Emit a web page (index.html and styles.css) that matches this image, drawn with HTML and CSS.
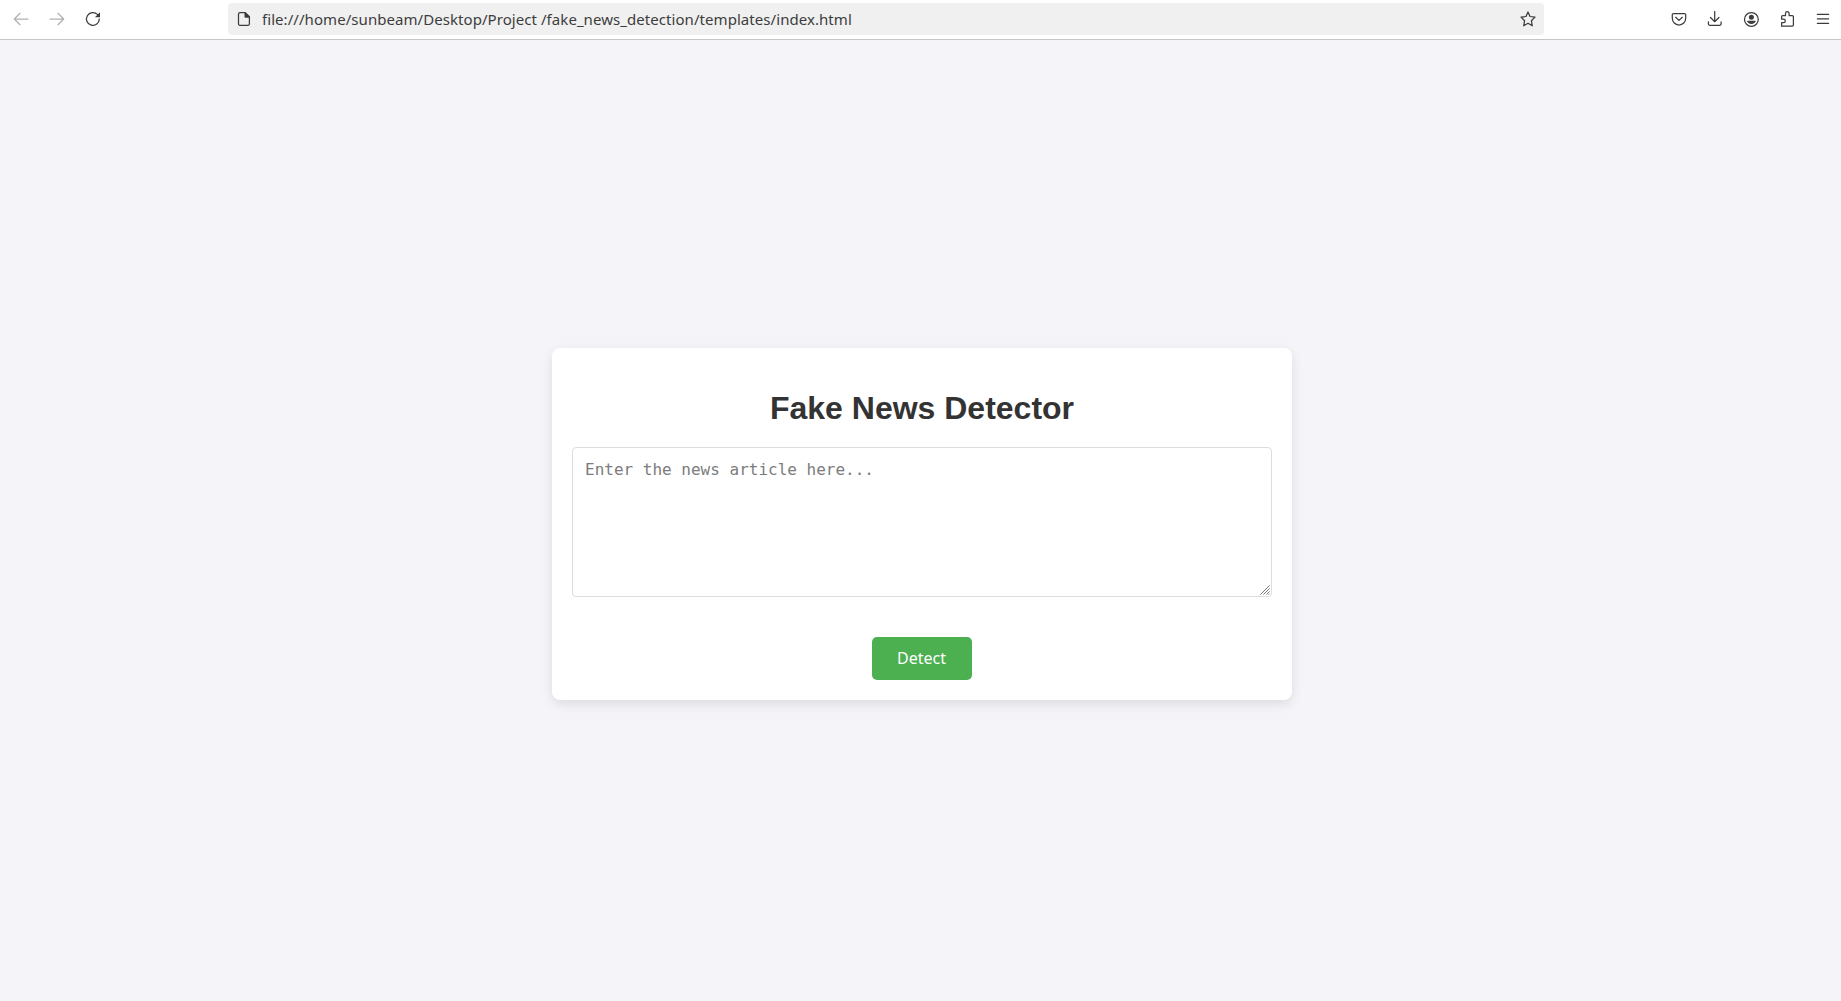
FILE: index.html
```html
<!DOCTYPE html>
<html lang="en">
<head>
<meta charset="utf-8">
<title>Fake News Detector</title>
<link rel="stylesheet" href="styles.css">
</head>
<body>
<header class="toolbar">
  <nav class="nav-buttons">
    <svg class="icon disabled" viewBox="0 0 16 16"><path d="M15 8H1.7M7 2.3 1.3 8 7 13.7"/></svg>
    <svg class="icon disabled" viewBox="0 0 16 16"><path d="M1 8h13.3M9 2.3 14.7 8 9 13.7"/></svg>
    <svg class="icon" viewBox="0 0 16 16"><path d="M14.3 8A6.4 6.4 0 1 1 12.4 3.4"/><path class="solid" d="M15 1.2V5.9a.4.4 0 0 1-.4.4H9.9z"/></svg>
  </nav>
  <div class="urlbar">
    <svg class="icon page-icon" viewBox="0 0 16 16"><path d="M4 1.7h5.3l4.1 4.1v7a1.5 1.5 0 0 1-1.5 1.5H4a1.5 1.5 0 0 1-1.5-1.5V3.2A1.5 1.5 0 0 1 4 1.7z"/><path class="solid" d="M8.500 1.700h1.100L13.500 5.600v1.200H9.500a1 1 0 0 1-1-1z"/></svg>
    <span class="url">file:///home/sunbeam/Desktop/Project /fake_news_detection/templates/index.html</span>
    <svg class="icon" viewBox="0 0 16 16"><path d="M8 1 10 5.500 15 6.100 11.400 9.700 12.300 14.800 8 12.300 3.700 14.800 4.600 9.700 1 6.100 6 5.500z"/></svg>
  </div>
  <div class="actions">
    <svg class="icon" viewBox="0 0 16 16"><path d="M2.600 2.500h10.800a1.300 1.300 0 0 1 1.300 1.300v3.500a6.700 6.700 0 0 1-13.400 0V3.800a1.300 1.300 0 0 1 1.300-1.300zM4.700 6.300 8 9.400l3.300-3.100"/></svg>
    <svg class="icon" viewBox="0 0 16 16"><path d="M7.700.5v10M3.500 6.500 7.700 10.700l4.200-4.200M1.400 10.800v2a1.500 1.500 0 0 0 1.500 1.500h9.700a1.500 1.500 0 0 0 1.500-1.500v-2"/></svg>
    <svg class="icon" viewBox="0 0 16 16"><circle cx="8.400" cy="8.400" r="6.900"/><circle class="solid" cx="8.400" cy="6.200" r="2.500"/><path class="solid" d="M4.500 9.800h7.800q.3 0 .2.400-.9 2.700-4.100 2.700t-4.100-2.700q-.1-.4.200-.4z"/></svg>
    <svg class="icon" viewBox="0 0 16 16"><path d="M2.600 15.200V11.600h2a1.700 1.700 0 0 0 0-3.400h-2V5.700a1 1 0 0 1 1-1h2.900V2.500a1.800 1.800 0 0 1 3.600 0v2.200h3.200a1.100 1.100 0 0 1 1.100 1.100v8.300a1.100 1.100 0 0 1-1.100 1.100z"/></svg>
    <svg class="icon" viewBox="0 0 16 16"><path d="M2.400 3.400h11.200M2.400 7.900h11.200M2.400 12.400h11.200"/></svg>
  </div>
</header>
<main class="page">
  <section class="container">
    <h1>Fake News Detector</h1>
    <div class="field">
      <textarea class="article" placeholder="Enter the news article here..."></textarea>
      <svg class="grip" viewBox="0 0 10 10"><path d="M.4 9.600 9.600.4M3.400 9.600l6.200-6.200M6.400 9.600l3.200-3.200M8.600 9.600l1-1"/></svg>
    </div>
    <button class="detect">Detect</button>
  </section>
</main>
</body>
</html>
```
FILE: styles.css
```css
* { box-sizing: border-box; }

body {
  margin: 0;
  height: 1001px;
  display: flex;
  flex-direction: column;
  overflow: hidden;
  background: #f4f4f9;
  font-family: "Liberation Sans", Arial, sans-serif;
}

.toolbar {
  flex: none;
  height: 40px;
  display: flex;
  align-items: flex-start;
  background: #fff;
  border-bottom: 1px solid #c5c5ca;
}

.icon {
  flex: none;
  width: 16px;
  height: 16px;
  fill: none;
  stroke: #3c3c3c;
  stroke-width: 1.25;
  stroke-linecap: round;
  stroke-linejoin: round;
}

.icon .solid { fill: #3c3c3c; stroke: none; }
.icon.disabled { stroke: #b1b1b1; }

.nav-buttons {
  width: 228px;
  padding: 11px 0 0 13px;
  display: flex;
  gap: 20px;
}

.urlbar {
  width: 1316px;
  height: 32px;
  margin-top: 3px;
  padding: 0 8px;
  display: flex;
  align-items: center;
  background: #f0f0f0;
  border-radius: 4px;
}

.url {
  flex: 1;
  margin-left: 10px;
  color: #3d3d3d;
  font: 15px/32px "Noto Sans", sans-serif;
  letter-spacing: 0.06px;
  white-space: pre;
}

.actions {
  margin-left: auto;
  padding: 11px 10px 0 0;
  display: flex;
  gap: 20px;
}

.page {
  flex: none;
  width: 1844px;
  height: 968px;
  display: flex;
  align-items: center;
  justify-content: center;
}

.container {
  width: 740px;
  height: 352px;
  padding: 20px;
  display: flex;
  flex-direction: column;
  align-items: center;
  background: #fff;
  border-radius: 8px;
  box-shadow: 0 4px 12px rgba(0, 0, 0, 0.1);
}

h1 {
  margin: 21px 0 20px;
  color: #333;
  font-size: 32px;
  line-height: 38px;
}

.field {
  position: relative;
  width: 700px;
  height: 150px;
}

.article {
  display: block;
  width: 100%;
  height: 100%;
  padding: 12px;
  border: 1px solid #ddd;
  border-radius: 4px;
  resize: none;
  font: 16px/19px "DejaVu Sans Mono", monospace;
}

.article::placeholder { color: #7c7c7c; }

.grip {
  position: absolute;
  right: 2px;
  bottom: 2px;
  width: 10px;
  height: 10px;
  fill: none;
  stroke: #777;
}

.detect {
  width: 100px;
  height: 43px;
  margin-top: 40px;
  padding: 0 1px 0 0;
  border: 0;
  border-radius: 5px;
  background: #4caf50;
  color: #fff;
  font: 16px/43px "Noto Sans", sans-serif;
}
```
